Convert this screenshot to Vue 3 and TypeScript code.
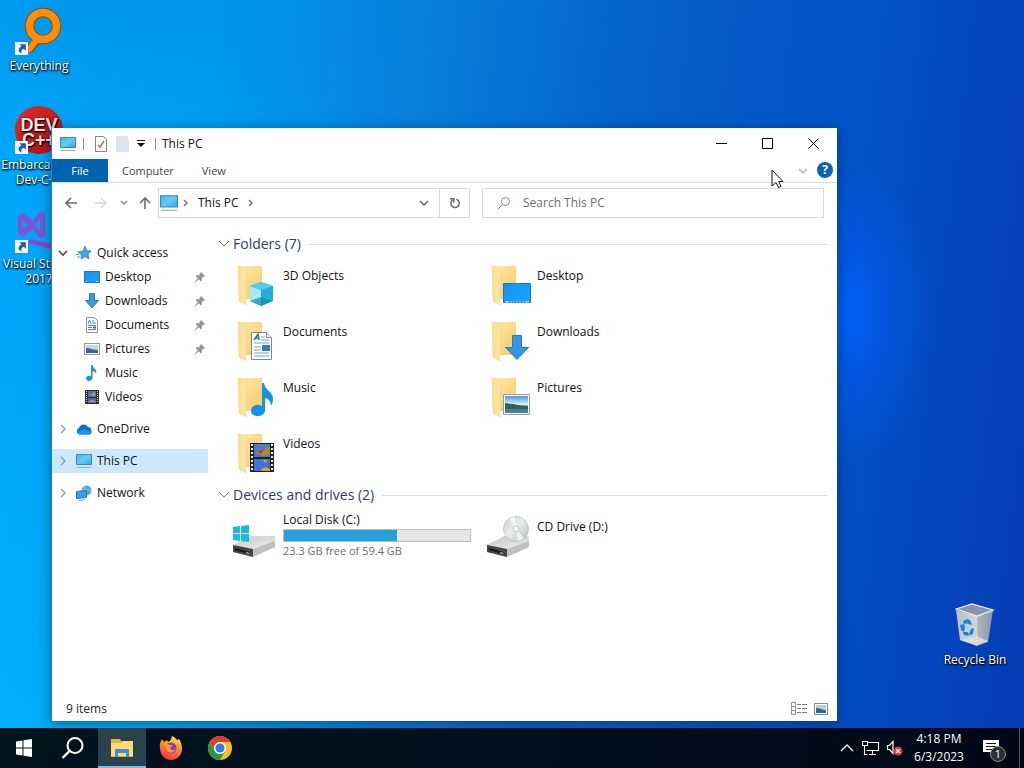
<script setup lang="ts">
import { ref } from 'vue'

interface DesktopIcon { label: string; icon: string; shortcut: boolean }
interface NavItem { label: string; icon: string; pinned?: boolean }
interface Folder { label: string; icon: string }
interface Drive { label: string; icon: string; freeGb?: number; totalGb?: number }

const shortcuts: DesktopIcon[] = [
  { label: 'Everything', icon: 'everything', shortcut: true },
  { label: 'Embarcadero Dev-C++', icon: 'devcpp', shortcut: true },
  { label: 'Visual Studio 2017', icon: 'vs', shortcut: true },
]

const quickAccess: NavItem[] = [
  { label: 'Desktop', icon: 's-desktop', pinned: true },
  { label: 'Downloads', icon: 's-download', pinned: true },
  { label: 'Documents', icon: 's-doc', pinned: true },
  { label: 'Pictures', icon: 's-pic', pinned: true },
  { label: 'Music', icon: 's-music' },
  { label: 'Videos', icon: 's-video' },
]

const roots: NavItem[] = [
  { label: 'OneDrive', icon: 's-cloud' },
  { label: 'This PC', icon: 's-pc' },
  { label: 'Network', icon: 's-network' },
]
const selected = ref('This PC')

const folders: Folder[] = [
  { label: '3D Objects', icon: 'o-3d' },
  { label: 'Desktop', icon: 'o-desktop' },
  { label: 'Documents', icon: 'o-doc' },
  { label: 'Downloads', icon: 'o-download' },
  { label: 'Music', icon: 'o-music' },
  { label: 'Pictures', icon: 'o-pic' },
  { label: 'Videos', icon: 'o-video' },
]

const drives: Drive[] = [
  { label: 'Local Disk (C:)', icon: 'd-disk', freeGb: 23.3, totalGb: 59.4 },
  { label: 'CD Drive (D:)', icon: 'd-cd' },
]
const usedPercent = (d: Drive) => Math.round((1 - (d.freeGb ?? 0) / (d.totalGb ?? 1)) * 100)

const tabs = ['Computer', 'View']
const apps = [
  { name: 'Start', icon: 't-start', active: false },
  { name: 'Search', icon: 't-search', active: false },
  { name: 'File Explorer', icon: 't-explorer', active: true },
  { name: 'Firefox', icon: 't-firefox', active: false },
  { name: 'Chrome', icon: 't-chrome', active: false },
]
const query = ref('')
</script>

<template>
  <svg class="defs" aria-hidden="true">
    <defs>
      <linearGradient id="gScreen" x1="0" y1="0" x2="1" y2="1">
        <stop offset="0" stop-color="#3fb4ef" /><stop offset=".5" stop-color="#63cbfa" /><stop offset="1" stop-color="#2ea4e6" />
      </linearGradient>
      <linearGradient id="gFold" x1="0" y1="0" x2="1" y2="1">
        <stop offset="0" stop-color="#ffe9a6" /><stop offset="1" stop-color="#f3cb69" />
      </linearGradient>
      <linearGradient id="gFlap" x1="0" y1="0" x2="1" y2="0">
        <stop offset="0" stop-color="#fbdc8d" /><stop offset="1" stop-color="#ffe8ab" />
      </linearGradient>
      <linearGradient id="gBlue" x1="0" y1="0" x2="1" y2="1">
        <stop offset="0" stop-color="#1494f3" /><stop offset="1" stop-color="#19a3ff" />
      </linearGradient>
      <linearGradient id="gSky" x1="0" y1="0" x2="0" y2="1">
        <stop offset="0" stop-color="#4a94dc" /><stop offset=".5" stop-color="#dff1fb" /><stop offset=".6" stop-color="#3d7480" /><stop offset="1" stop-color="#4386b5" />
      </linearGradient>
      <linearGradient id="gDrive" x1="0" y1="0" x2="1" y2="1">
        <stop offset="0" stop-color="#c6c6c6" /><stop offset="1" stop-color="#efefef" />
      </linearGradient>
      <linearGradient id="gDisc" x1="0" y1="0" x2="1" y2="1">
        <stop offset="0" stop-color="#c4cccc" /><stop offset=".45" stop-color="#e8eeee" /><stop offset="1" stop-color="#b4bcbc" />
      </linearGradient>
      <linearGradient id="gFire" x1=".7" y1="0" x2=".3" y2="1">
        <stop offset="0" stop-color="#ffe03a" /><stop offset=".45" stop-color="#ff8b20" /><stop offset="1" stop-color="#f62a56" />
      </linearGradient>
      <linearGradient id="gRed" x1="0" y1="0" x2="1" y2="1">
        <stop offset="0" stop-color="#e02c2c" /><stop offset="1" stop-color="#a90e14" />
      </linearGradient>
      <linearGradient id="gBin" x1="0" y1="0" x2="1" y2="0">
        <stop offset="0" stop-color="#b9c1ca" /><stop offset=".55" stop-color="#d2d5d8" /><stop offset=".6" stop-color="#aeb1b7" /><stop offset="1" stop-color="#8b97b0" />
      </linearGradient>

      <symbol id="everything" viewBox="0 0 48 48">
        <path d="M24 32 13 44" stroke="#7a5415" stroke-width="8" />
        <circle cx="28" cy="19" r="13.500" fill="none" stroke="#7a5415" stroke-width="9.500" />
        <path d="M24 30 13 44" stroke="#ff8c0a" stroke-width="6" />
        <circle cx="28" cy="19" r="13.500" fill="none" stroke="#ff8c0a" stroke-width="7.500" />
      </symbol>
      <symbol id="devcpp" viewBox="0 0 48 48">
        <circle cx="24" cy="24" r="24" fill="url(#gRed)" />
        <text x="24" y="25" text-anchor="middle" class="logo-text">DEV</text>
        <text x="24" y="40" text-anchor="middle" class="logo-text">C++</text>
      </symbol>
      <symbol id="vs" viewBox="0 0 48 48">
        <path d="M3 11 8 8 18 16 25 6 30 8v24l-5 2-7-10-10 8-5-3zM7 15v9l6-4.500zM20 20l5-6v12z" fill="#7d56cf" fill-rule="evenodd" />
        <path d="M14 34 48 41v6L14 38z" fill="#9047c4" />
      </symbol>
      <symbol id="arrow" viewBox="0 0 12 12">
        <rect width="12" height="12" fill="#f4f8fc" />
        <path d="M4 2h6v6L8 6.200C6 7 5.500 8.500 6 10.500 2.500 9.500 2.500 6 6 4z" fill="#1f5ba8" />
      </symbol>
      <symbol id="bin" viewBox="0 0 40 44">
        <path d="M1 7 5 37 22 43 33 39 38 7 22 13z" fill="url(#gBin)" />
        <path d="M1 6 17 1 38 7 22 13z" fill="#8793ac" stroke="#eff3f8" stroke-width="1.300" />
        <path d="M5 37 22 42 33 38 22 33z" fill="#e2dfda" opacity=".8" />
        <path d="m8 18 4-2 3 1 2 5-4-1-2-1-2 2zM5 22l4-1 1 3-1 5-3-2zM8 29l5 0 1 4-5-1zM15 28l1-2 3-1-1 6-3 1-1-1z" fill="#128ad8" />
      </symbol>

      <symbol id="s-pc" viewBox="0 0 16 16">
        <path d="M.5 1.500h15v10H.5z" fill="url(#gScreen)" stroke="#4287ad" />
        <path d="M1 14.500h14" stroke="#8fb0c6" />
      </symbol>
      <symbol id="s-star" viewBox="0 0 16 16">
        <path d="m9 1 1.600 4.500L15 6l-3 3 .8 5L9 11.500 5 14l.5-4L2 7l5-.800z" fill="#3ba6ea" stroke="#2384c8" stroke-width=".8" />
        <path d="M1 12h3M0 9.500h3" stroke="#3ba6ea" />
      </symbol>
      <symbol id="s-desktop" viewBox="0 0 16 16">
        <path d="M.5 2.500h15v11H.5z" fill="url(#gBlue)" stroke="#2178b4" /><path d="M2 12.500h1m9 0h2" stroke="#bfe4ff" />
      </symbol>
      <symbol id="s-download" viewBox="0 0 16 16">
        <path d="M5.500.5h5v7h4L8 15 1.500 7.500h4z" fill="#4397dd" stroke="#3079b8" />
      </symbol>
      <symbol id="s-doc" viewBox="0 0 16 16">
        <path d="M2.500.5h8l3 3v12h-11z" fill="#fff" stroke="#8995a0" />
        <path d="m4 7 1.500-4L7 7M8 4h2M8 6h4M4 8.500h8M4 10.500h4M4 12.500h8" stroke="#3f90a8" fill="none" /><path d="M9 9.500h3v2H9z" fill="#356995" />
      </symbol>
      <symbol id="s-pic" viewBox="0 0 16 16">
        <path d="M.5 2.500h15v11H.5z" fill="#fff" stroke="#8c98a3" /><path d="M2 4h12v8H2z" fill="#b9d8ee" /><path d="M2 7c4 0 7 2 12 2v3H2z" fill="#3c6788" />
      </symbol>
      <symbol id="s-music" viewBox="0 0 16 16">
        <path d="M7 0h1.500c.5 3.500 5 4 3.500 9-.5-2-1.500-3-3.500-3v7C8.500 16.500 2 17 2 13.500c0-2.500 3-3.300 5-2.500z" fill="#1994df" />
      </symbol>
      <symbol id="s-video" viewBox="0 0 16 16">
        <path d="M1 1h14v14H1z" fill="#2b2b2b" /><path d="M4 2h8v6H4z" fill="#586bb9" /><path d="M4 9h8v5H4z" fill="#4b64c8" />
        <path d="M5 5h3l2-2 2 3-3 1zM5 12l4-1 3 2H5z" fill="#b7a43b" /><path d="M2.500 2v12M13.500 2v12" stroke="#e5e5e5" stroke-dasharray="1 1" />
      </symbol>
      <symbol id="s-cloud" viewBox="0 0 16 16">
        <path d="M3 13.500A3.500 3.500 0 0 1 3 7c1-4 7-5 9-1 4 0 5 7 1 7.500z" fill="#0f6fc4" /><path d="M3 13.500c-2-2 0-5 3-4.500l2-1 5 2c3 0 3 3 0 3.500z" fill="#1c93e6" />
      </symbol>
      <symbol id="s-network" viewBox="0 0 16 16">
        <circle cx="10.500" cy="5.500" r="5" fill="#4da7d6" /><path d="M8 1c2 3 0 5 3 9M6 5c3 1 6-2 9 1" stroke="#a8dcc6" fill="none" />
        <path d="m.5 6.500 10-1v7l-10 1z" fill="#38a0e2" stroke="#2878a8" /><path d="M3 15.500 9 14.500" stroke="#5b9ec4" />
      </symbol>
      <symbol id="pin" viewBox="0 0 12 12">
        <path d="m7 1 4 4-1 .8-.7-.1L7.600 7.500 8 9.500 7 10.400 4.800 8.200 1 11.500.5 11 3.800 7.200 1.600 5 2.500 4l2 .4L6.300 2.700 6.200 2z" fill="#8d969e" />
      </symbol>

      <symbol id="folder" viewBox="0 0 48 48">
        <path d="M8 3h23v33H12z" fill="url(#gFold)" />
        <path d="m7 3 8 5v34L8 38z" fill="url(#gFlap)" stroke="#f0d084" stroke-width=".5" />
      </symbol>
      <symbol id="o-3d" viewBox="0 0 48 48">
        <path d="m19 23 11-4 12 4v15l-12 5-11-5z" fill="#21b1d8" /><path d="m19 23 11 4v16l-11-5z" fill="#a7e9f5" /><path d="m19 23 11-4 12 4-12 4z" fill="#51cfe9" /><path d="m19 38 11-4 12 4-12 5z" fill="#1289a5" opacity=".7" />
      </symbol>
      <symbol id="o-desktop" viewBox="0 0 48 48">
        <path d="M18.500 20.500h27v19h-27z" fill="url(#gBlue)" stroke="#2474ad" /><path d="M20 39h4m16 0h4" stroke="#e0f3ff" /><path d="M25 39h14" stroke="#9ad3ff" stroke-dasharray="2 1" />
      </symbol>
      <symbol id="o-doc" viewBox="0 0 48 48">
        <path d="M20.500 13.500h15l5 5v22h-20z" fill="#fff" stroke="#7c8791" /><path d="M35.500 13.500v5h5" fill="#e7eaed" stroke="#7c8791" />
        <path d="m23 21 4-6 1 6m-4-2h4" stroke="#2177b9" stroke-width="1.500" fill="none" /><path d="M30 18h4M30 21h8M23 24h15M23 28h7M23 31h7M23 34h15M23 37h15" stroke="#6ca8c8" /><path d="M31 26h8v6h-8z" fill="#3d78b5" />
      </symbol>
      <symbol id="o-download" viewBox="0 0 48 48">
        <path d="M27.500 16.500h9v12h7L32 40.500 20.500 28.500h7z" fill="#3696e4" stroke="#2c7dbf" />
      </symbol>
      <symbol id="o-music" viewBox="0 0 48 48">
        <path d="M31 8h2c1 8 9 8 9 16 0 3-1 5-2 7 0-5-3-8-6-8v12c0 8-14 8-14 1 0-5 6-8 11-5z" fill="#1592e2" />
      </symbol>
      <symbol id="o-pic" viewBox="0 0 48 48">
        <path d="M18.500 19.500h26v20h-26z" fill="#fff" stroke="#929da8" /><path d="M20 21h23v17H20z" fill="url(#gSky)" /><path d="m20 28 8 1 15 3v2H20z" fill="#336056" />
      </symbol>
      <symbol id="o-video" viewBox="0 0 48 48">
        <path d="M19 12h24v29H19z" fill="#222" /><path d="M23 13h16v13H23z" fill="#4f78cd" /><path d="M23 28h16v12H23z" fill="#4172d8" />
        <path d="m24 22 5-3 4 1 2-5 4 2v6l-6 2z" fill="#9a9228" /><path d="m27 20 6-1-4 4zM35 35h4l-2 3z" fill="#c62b35" /><path d="m30 38 5-2 4 2v2h-8zM32 29l5 0-3 3z" fill="#d0a92b" />
        <path d="M21 13v27M41 13v27" stroke="#eee" stroke-width="2" stroke-dasharray="2 2" />
      </symbol>

      <symbol id="base" viewBox="0 0 48 48">
        <path d="m2 31 18-9h24v11l-23 10L2 38z" fill="#d9d9d9" /><path d="m2 31 18-9 24 5-22 8z" fill="url(#gDrive)" /><path d="m22 35 22-8v6L22 43z" fill="#bfbfbf" /><path d="m2 31 20 4v8L2 38z" fill="#454545" /><path d="m4 34 14 4v2L4 36z" fill="#161616" /><path d="m15 38 3 1v1l-3-1z" fill="#c5e8c5" />
      </symbol>
      <symbol id="d-disk" viewBox="0 0 48 48">
        <use href="#base" /><path d="m2 13 7-1v7H2zM10 12l8-1v8h-8zM2 20h7v7l-7-1zM10 20h8v8l-8-1z" fill="#18bdd9" />
      </symbol>
      <symbol id="d-cd" viewBox="0 0 48 48">
        <use href="#base" /><circle cx="31" cy="15" r="12.500" fill="url(#gDisc)" stroke="#b3b9b9" stroke-width=".7" /><path d="m31 15-7-10a12 12 0 0 1 6-2zM31 15l8 9a12 12 0 0 1-6 3z" fill="#f6f9f9" opacity=".8" /><circle cx="31" cy="15" r="3" fill="#f4f6f6" stroke="#c5caca" />
      </symbol>

      <symbol id="t-start" viewBox="0 0 24 24">
        <path d="m4 5.500 6.500-1v7H4zM11.500 4.300 20 3v8.500h-8.500zM4 12.500h6.500v7l-6.500-1zM11.500 12.500H20V21l-8.500-1.300z" fill="#fff" />
      </symbol>
      <symbol id="t-search" viewBox="0 0 24 24">
        <circle cx="14" cy="9.500" r="7.500" fill="none" stroke="#fff" stroke-width="2" /><path d="m8.500 15-7 7" stroke="#fff" stroke-width="2.400" />
      </symbol>
      <symbol id="t-explorer" viewBox="0 0 24 24">
        <path d="M1 3h9l1 2h12v16H1z" fill="#e8b23f" /><path d="M1 7h10l2-2h10v15H1z" fill="#ffd975" /><path d="M5 13h14v8h-3v-4H8v4H5z" fill="#3c8fd4" />
      </symbol>
      <symbol id="t-firefox" viewBox="0 0 24 24">
        <path d="M1 12C0 8 2 5 3 3l2 3 3-2 1 2c2-1 3-2 4-6 3 1 4 3 5 4l2-1c6 9 3 20-8 21C5 24 1 18 1 12z" fill="url(#gFire)" /><circle cx="12" cy="12" r="5.500" fill="#7e3bd0" /><path d="M4 8c3-2 5-1 6 1l4 0-3 3c1 3 4 3 6 0-1 5-7 6-9 3-1-3-2-5-4-7z" fill="#ff9924" />
      </symbol>
      <symbol id="t-chrome" viewBox="0 0 24 24">
        <circle cx="12" cy="12" r="12" fill="#fbc116" /><path d="M1.600 6a12 12 0 0 1 20.800 0H12a6 6 0 0 0-5.200 9z" fill="#e33b2e" /><path d="M1.600 6A12 12 0 0 0 12 24l5.200-9a6 6 0 0 1-10.400 0z" fill="#229a48" /><circle cx="12" cy="12" r="6" fill="#fff" /><circle cx="12" cy="12" r="4.600" fill="#3478e5" />
      </symbol>
    </defs>
  </svg>

  <div class="screen">
    <main class="desktop">
      <div class="shortcuts">
        <a v-for="s in shortcuts" :key="s.label" href="#" class="shortcut">
          <span class="art">
            <svg class="big"><use :href="'#' + s.icon" /></svg>
            <svg v-if="s.shortcut" class="badge"><use href="#arrow" /></svg>
          </span>
          <span class="caption">{{ s.label }}</span>
        </a>
      </div>

      <a href="#" class="shortcut bin">
        <svg class="bin-art"><use href="#bin" /></svg>
        <span class="caption">Recycle Bin</span>
      </a>

      <section class="window" aria-label="This PC">
        <header class="titlebar">
          <svg class="i16"><use href="#s-pc" /></svg>
          <span class="sep"></span>
          <button class="tool" aria-label="Properties">
            <svg width="14" height="16" viewBox="0 0 14 16"><path d="M1.500.5h8l3 3v12h-11z" fill="#fdfdfd" stroke="#8d8680" /><path d="m4 9 2 2 4-6" fill="none" stroke="#b5754c" stroke-width="1.500" /></svg>
          </button>
          <button class="tool" aria-label="New folder">
            <svg width="14" height="16" viewBox="0 0 14 16"><path d="M0 0h12v4h1v12H0z" fill="#dde4ef" /></svg>
          </button>
          <button class="tool small" aria-label="Customize Quick Access Toolbar">
            <svg width="8" height="8" viewBox="0 0 8 8"><path d="M0 0h8v1H0zM0 3h8L4 7z" fill="#111" /></svg>
          </button>
          <span class="sep"></span>
          <h1>This PC</h1>
          <div class="controls">
            <button aria-label="Minimize"><svg width="11" height="11" viewBox="0 0 11 11"><path d="M0 5.500h11" stroke="#000" /></svg></button>
            <button aria-label="Maximize"><svg width="11" height="11" viewBox="0 0 11 11"><path d="M.5.5h10v10H.5z" stroke="#000" fill="none" /></svg></button>
            <button aria-label="Close"><svg width="11" height="11" viewBox="0 0 11 11"><path d="m.5.5 10 10m0-10-10 10" stroke="#000" /></svg></button>
          </div>
        </header>

        <nav class="ribbon">
          <button class="file">File</button>
          <button v-for="t in tabs" :key="t" class="tab">{{ t }}</button>
          <span class="grow"></span>
          <button class="plain" aria-label="Expand the Ribbon"><svg width="10" height="6" viewBox="0 0 10 6"><path d="m1 1 4 4 4-4" fill="none" stroke="#b4b4b4" stroke-width="1.500" /></svg></button>
          <button class="help" aria-label="Help">?</button>
        </nav>

        <div class="bar">
          <button class="nav-btn" aria-label="Back"><svg width="14" height="12" viewBox="0 0 14 12"><path d="M13 6H2m5-5L2 6l5 5" fill="none" stroke="#6b6b6b" stroke-width="1.600" /></svg></button>
          <button class="nav-btn" aria-label="Forward"><svg width="14" height="12" viewBox="0 0 14 12"><path d="M1 6h11M7 1l5 5-5 5" fill="none" stroke="#d8d8d8" stroke-width="1.400" /></svg></button>
          <button class="nav-btn slim" aria-label="Recent locations"><svg width="8" height="6" viewBox="0 0 8 6"><path d="m1 1 3 3 3-3" fill="none" stroke="#8a8a8a" stroke-width="1.500" /></svg></button>
          <button class="nav-btn mid" aria-label="Up"><svg width="12" height="14" viewBox="0 0 12 14"><path d="M6 13V2M1 7l5-5 5 5" fill="none" stroke="#6b6b6b" stroke-width="1.600" /></svg></button>
          <div class="address">
            <svg class="i18"><use href="#s-pc" /></svg>
            <svg class="crumb-sep" viewBox="0 0 6 8"><path d="m1 1 3 3-3 3" fill="none" stroke="#6e6e6e" stroke-width="1.400" /></svg>
            <button class="crumb">This PC</button>
            <svg class="crumb-sep" viewBox="0 0 6 8"><path d="m1 1 3 3-3 3" fill="none" stroke="#6e6e6e" stroke-width="1.400" /></svg>
            <span class="grow"></span>
            <button class="addr-btn" aria-label="Previous locations"><svg width="10" height="7" viewBox="0 0 10 7"><path d="m1 1 4 4 4-4" fill="none" stroke="#6e6e6e" stroke-width="1.700" /></svg></button>
            <button class="addr-btn refresh" aria-label="Refresh"><svg width="12" height="12" viewBox="0 0 12 12"><path d="M3.500 3a4.200 4.200 0 1 0 5.500.3M1 1.700h3.800v4M9.800 4.300 7.500 2" fill="none" stroke="#707070" stroke-width="1.600" /></svg></button>
          </div>
          <label class="search">
            <svg width="14" height="14" viewBox="0 0 14 14"><circle cx="8.500" cy="5.500" r="4" fill="none" stroke="#8a8a8a" /><path d="m5.500 8.500-4.500 4.500" stroke="#8a8a8a" /></svg>
            <input v-model="query" type="text" placeholder="Search This PC" aria-label="Search This PC" />
          </label>
        </div>

        <div class="body">
          <aside class="tree">
            <ul>
              <li>
                <a href="#" class="node">
                  <svg class="twist" viewBox="0 0 10 10"><path d="m1 3 4 4 4-4" fill="none" stroke="#444" stroke-width="1.600" /></svg>
                  <svg class="i16"><use href="#s-star" /></svg>Quick access
                </a>
                <ul>
                  <li v-for="q in quickAccess" :key="q.label">
                    <a href="#" class="node child">
                      <svg class="i16"><use :href="'#' + q.icon" /></svg>{{ q.label }}
                      <svg v-if="q.pinned" class="pin"><use href="#pin" /></svg>
                    </a>
                  </li>
                </ul>
              </li>
              <li v-for="r in roots" :key="r.label">
                <a href="#" class="node" :class="{ selected: selected === r.label }" @click.prevent="selected = r.label">
                  <svg class="twist" viewBox="0 0 10 10"><path d="m3 1 4 4-4 4" fill="none" stroke="#a0a0a0" stroke-width="1.500" /></svg>
                  <svg class="i16"><use :href="'#' + r.icon" /></svg>{{ r.label }}
                </a>
              </li>
            </ul>
          </aside>

          <div class="content">
            <section>
              <h2><svg class="fold" viewBox="0 0 12 8"><path d="m1 1 5 5 5-5" fill="none" stroke="#7b7b7b" /></svg>Folders (7)</h2>
              <div class="grid">
                <a v-for="f in folders" :key="f.label" href="#" class="tile">
                  <svg class="i48"><use href="#folder" /><use :href="'#' + f.icon" /></svg>
                  <span>{{ f.label }}</span>
                </a>
              </div>
            </section>
            <section>
              <h2><svg class="fold" viewBox="0 0 12 8"><path d="m1 1 5 5 5-5" fill="none" stroke="#7b7b7b" /></svg>Devices and drives (2)</h2>
              <div class="grid drives">
                <a v-for="d in drives" :key="d.label" href="#" class="tile drive">
                  <svg class="i48"><use :href="'#' + d.icon" /></svg>
                  <span v-if="d.totalGb" class="details">
                    <span>{{ d.label }}</span>
                    <span class="gauge" role="meter" :aria-valuenow="usedPercent(d)" aria-label="Used space"><span class="fill" :style="{ width: usedPercent(d) + '%' }"></span></span>
                    <span class="free">{{ d.freeGb }} GB free of {{ d.totalGb }} GB</span>
                  </span>
                  <span v-else class="plain-label">{{ d.label }}</span>
                </a>
              </div>
            </section>
          </div>
        </div>

        <footer class="status">
          <span>9 items</span>
          <span class="grow"></span>
          <button class="view" aria-label="Details view"><svg width="16" height="13" viewBox="0 0 16 13"><path d="M.5.5h4v12h-4zM.5 4.500h4M.5 8.500h4" fill="none" stroke="#909090" /><path d="M6 2.500h4m1 0h5M6 6.500h4m1 0h5M6 10.500h4m1 0h5" stroke="#7a7a7a" /></svg></button>
          <button class="view" aria-label="Large icons view"><svg width="14" height="12" viewBox="0 0 14 12"><path d="M.5.5h13v11H.5z" fill="#fff" stroke="#7d8a96" /><path d="M2 2h10v8H2z" fill="#a8d3f0" /><path d="M2 5c4 0 6 2 10 2v3H2z" fill="#2f6b96" /></svg></button>
        </footer>
      </section>

      <svg class="cursor" width="13" height="20" viewBox="0 0 13 20"><path d="M1 1v16l4-3.500 2.500 5 2.500-1-2.300-5H12z" fill="#fff" stroke="#111" /></svg>
    </main>

    <footer class="taskbar">
      <button v-for="a in apps" :key="a.name" class="app" :class="{ active: a.active }" :aria-label="a.name">
        <svg class="i24"><use :href="'#' + a.icon" /></svg>
      </button>
      <span class="grow"></span>
      <button class="tray" aria-label="Show hidden icons"><svg width="14" height="8" viewBox="0 0 14 8"><path d="m1 7 6-6 6 6" fill="none" stroke="#fff" stroke-width="1.300" /></svg></button>
      <button class="tray" aria-label="Network"><svg width="18" height="16" viewBox="0 0 18 16"><path d="M5.500 2.500h11v8H4.500M10.500 11v3M7 14.500h7M.5 1.500h5v4h-5zM2.500 6v8.500h3" fill="none" stroke="#fff" stroke-width="1.100" /></svg></button>
      <button class="tray" aria-label="Volume muted"><svg width="18" height="16" viewBox="0 0 18 16"><path d="M1.500 5.500h2l3.500-4v12l-3.500-4h-2z" fill="none" stroke="#fff" stroke-width="1.200" /><circle cx="12" cy="11" r="4.500" fill="#d9343c" /><path d="m10 9 4 4m0-4-4 4" stroke="#fff" stroke-width="1.200" /></svg></button>
      <button class="clock"><span>4:18 PM</span><span>6/3/2023</span></button>
      <button class="notify" aria-label="Notifications">
        <svg width="18" height="16" viewBox="0 0 18 16"><path d="M1 0h16v12h-5v4l-4-4H1z" fill="#fff" /><path d="M4 3.500h10M4 6.500h10M4 9.500h6" stroke="#0a1420" /></svg>
        <span class="count">1</span>
      </button>
      <span class="peek"></span>
    </footer>
  </div>
</template>

<style>
html, body { margin: 0; height: 100%; overflow: hidden; }
</style>

<style scoped>
.defs { position: absolute; width: 0; height: 0; }
.screen { height: 100vh; display: flex; flex-direction: column; font: 12px/16px "Open Sans", "Noto Sans", sans-serif; color: #111; }
button { font: inherit; color: inherit; border: 0; padding: 0; background: none; display: flex; align-items: center; justify-content: center; }
a { color: inherit; text-decoration: none; }
ul { list-style: none; margin: 0; padding: 0; }
h1, h2 { margin: 0; font-weight: 400; }
svg { display: block; flex: none; }
.grow { flex: 1; }
.i16 { width: 16px; height: 16px; }
.i18 { width: 18px; height: 18px; }
.i24 { width: 24px; height: 24px; }
.i48 { width: 48px; height: 48px; }
.logo-text { font: 700 18px "Liberation Sans", sans-serif; fill: #f8e4e2; }

.desktop {
  flex: 1; position: relative; min-height: 0; overflow: hidden;
  background:
    radial-gradient(ellipse 80px 150px at 83% 43%, #0062ffdd 0, #0062ff66 45%, #0062ff00 100%),
    radial-gradient(ellipse 420px 160px at 10% 0, #0078d055 0, #0078d000 100%),
    radial-gradient(ellipse 400px 400px at 0 100%, #00b4fcaa 0, #00b4fc00 100%),
    linear-gradient(97deg, #00a8fa 0, #00a0f4 20%, #0880dc 38%, #0462c8 58%, #0450c8 80%, #043cb4 100%);
}
.shortcuts { display: flex; flex-direction: column; gap: 6px; width: 78px; padding-top: 7px; }
.shortcut { display: flex; flex-direction: column; align-items: center; height: 93px; color: #fff; text-align: center; line-height: 15px; text-shadow: 1px 1px 2px #000, 0 1px 2px #000; }
.art { position: relative; margin-bottom: 3px; }
.big { width: 48px; height: 48px; }
.badge { position: absolute; left: 0; bottom: 0; width: 13px; height: 13px; }
.bin { position: absolute; right: 11px; bottom: 32px; width: 76px; }
.bin-art { width: 40px; height: 44px; margin-bottom: 5px; }

.window { position: absolute; top: 128px; right: 187px; bottom: 7px; left: 51px; display: flex; flex-direction: column; background: #fff; border-left: 1px solid #1583c8; box-shadow: 0 2px 12px #00204080; box-sizing: border-box; }
.titlebar { display: flex; align-items: center; height: 31px; padding: 0 1px 0 8px; }
.sep { width: 1px; height: 12px; margin: 0 6px 0 7px; background: #999; }
.tool { width: 22px; }
.tool.small { width: 14px; }
.titlebar h1 { font-size: 12px; }
.controls { display: flex; align-self: stretch; margin-left: auto; }
.controls button { width: 46px; }
.ribbon { display: flex; height: 23px; border-bottom: 1px solid #dcdcdc; color: #444; font-size: 11px; }
.file { width: 56px; background: #0063b1; color: #fff; }
.tab { padding: 0 14px; }
.plain { width: 20px; }
.help { width: 16px; height: 16px; margin: 3px 4px 0 4px; border-radius: 50%; background: #0a63b5; color: #fff; font-weight: 700; font-size: 12px; line-height: 16px; }
.bar { display: flex; align-items: center; height: 40px; padding: 0 13px 0 4px; }
.nav-btn { width: 30px; height: 30px; }
.nav-btn.slim { width: 16px; }
.nav-btn.mid { width: 26px; }
.address { flex: 1 1 312px; display: flex; align-items: center; height: 30px; border: 1px solid #d9d9d9; box-sizing: border-box; padding-left: 1px; }
.crumb-sep { width: 6px; height: 8px; margin: 0 5px; }
.crumb { padding: 0 4px; }
.addr-btn { width: 30px; height: 28px; }
.refresh { border-left: 1px solid #d9d9d9; }
.search { flex: 1 1 342px; display: flex; align-items: center; gap: 12px; height: 30px; margin-left: 12px; padding-left: 14px; border: 1px solid #d9d9d9; box-sizing: border-box; }
.search input { flex: 1; min-width: 0; border: 0; outline: 0; padding: 0; font: inherit; background: none; }
.search input::placeholder { color: #6d6d6d; opacity: 1; }

.body { flex: 1; display: flex; min-height: 0; }
.tree { width: 156px; padding-top: 18px; }
.tree > ul { display: flex; flex-direction: column; gap: 8px; }
.node { display: flex; align-items: center; gap: 5px; height: 24px; padding-left: 6px; }
.node.child { padding-left: 32px; }
.node.selected { background: #cce8ff; }
.twist { width: 10px; height: 10px; margin-right: 3px; }
.pin { width: 12px; height: 12px; margin-left: auto; margin-right: 2px; }
.content { flex: 1; padding: 10px 10px 0 10px; }
h2 { display: flex; align-items: center; height: 22px; font-size: 14px; color: #2b3a78; }
h2::after { content: ""; flex: 1; height: 1px; margin-left: 8px; background: #e0e0e0; }
.fold { width: 12px; height: 8px; margin-right: 3px; }
.grid { display: grid; grid-template-columns: repeat(auto-fill, 254px); padding: 8px 0 0 13px; margin-bottom: -3px; }
.tile { display: flex; gap: 4px; height: 56px; line-height: 16px; }
.tile > span { padding-top: 5px; }
.tile.drive { height: 50px; }
.drive .i48 { margin-top: 1px; }
.grid.drives { padding-top: 7px; }
.tile > .details { display: flex; flex-direction: column; gap: 1px; padding-top: 0; width: 188px; margin-top: -1px; }
.tile > .plain-label { padding-top: 6px; }
.gauge { height: 13px; border: 1px solid #bcbcbc; background: #e6e6e6; box-sizing: border-box; }
.fill { display: block; height: 100%; background: #26a0da; }
.free { color: #6d6d6d; font-size: 11px; }
.status { display: flex; align-items: center; height: 25px; padding: 0 5px 0 14px; color: #223; }
.view { width: 22px; }
.cursor { position: absolute; left: 771px; top: 169px; }

.taskbar { display: flex; align-items: stretch; gap: 1px; height: 40px; background: linear-gradient(90deg, #00141e, #000c1c 70%, #000816); color: #fff; }
.app { width: 48px; }
.app.active { background: #2b414c; box-shadow: inset 0 -2px #76b9ed; }
.tray { width: 23px; }
.clock { flex-direction: column; width: 64px; line-height: 18px; }
.notify { position: relative; width: 38px; margin-right: 8px; }
.count { position: absolute; left: 18px; top: 18px; width: 16px; height: 16px; border: 1px solid #858b91; border-radius: 50%; background: #2b3036; font-size: 11px; line-height: 14px; box-sizing: border-box; }
.peek { width: 4px; border-left: 1px solid #4a5460; }
</style>
